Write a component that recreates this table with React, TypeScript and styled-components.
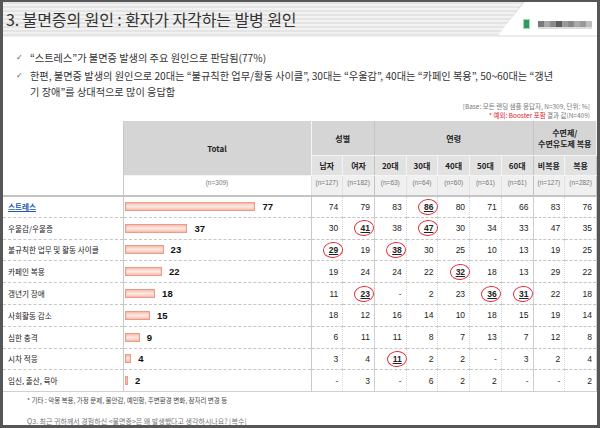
import React from "react";
import styled, { createGlobalStyle } from "styled-components";

const GlobalStyle = createGlobalStyle`
  html, body {
    margin: 0;
    padding: 0;
    background: #ffffff;
  }
  body {
    font-family: "Noto Sans CJK KR", "Liberation Sans", sans-serif;
    color: #222;
  }
`;

interface Row {
  label: string;
  total: number;
  values: (number | null)[];
  circled: number[];
  highlight?: boolean;
}

const rows: Row[] = [
  { label: "스트레스", total: 77, values: [74, 79, 83, 86, 80, 71, 66, 83, 76], circled: [3], highlight: true },
  { label: "우울감/우울증", total: 37, values: [30, 41, 38, 47, 30, 34, 33, 47, 35], circled: [1, 3] },
  { label: "불규칙한 업무 및 활동 사이클", total: 23, values: [29, 19, 38, 30, 25, 10, 13, 19, 25], circled: [0, 2] },
  { label: "카페인 복용", total: 22, values: [19, 24, 24, 22, 32, 18, 13, 29, 22], circled: [4] },
  { label: "갱년기 장애", total: 18, values: [11, 23, null, 2, 23, 36, 31, 22, 18], circled: [1, 5, 6] },
  { label: "사회활동 감소", total: 15, values: [18, 12, 16, 14, 10, 18, 15, 19, 14], circled: [] },
  { label: "심한 충격", total: 9, values: [6, 11, 11, 8, 7, 13, 7, 12, 8], circled: [] },
  { label: "시차 적응", total: 4, values: [3, 4, 11, 2, 2, null, 3, 2, 4], circled: [2] },
  { label: "임신, 출산, 육아", total: 2, values: [null, 3, null, 6, 2, 2, null, null, 2], circled: [] },
];

const subColumns = [
  { name: "남자", n: 127 },
  { name: "여자", n: 182 },
  { name: "20대", n: 63 },
  { name: "30대", n: 64 },
  { name: "40대", n: 60 },
  { name: "50대", n: 61 },
  { name: "60대", n: 61 },
  { name: "비복용", n: 127 },
  { name: "복용", n: 282 },
];

// columns that close a group (성별 / 연령 / 수면제)
const groupEnds = [1, 6, 8];

// blurred company wordmark, drawn as shaded blocks
const logoShades = ["#7a7a7a", "#a8a8a8", "#8a8a8a", "#5e5e5e", "#9a9a9a", "#888", "#aaa", "#999", "#bdbdbd"];

export default function App() {
  return (
    <>
      <GlobalStyle />
      <Frame>
        <Header>
          <TitleBand>
            <Title>3. 불면증의 원인 : 환자가 자각하는 발병 원인</Title>
          </TitleBand>
          <LogoArea>
            <GreenMark />
            <Wordmark>
              {logoShades.map((c, i) => (
                <Block key={i} $color={c} />
              ))}
            </Wordmark>
          </LogoArea>
        </Header>

        <Bullets>
          <Bullet>
            <Check>✓</Check>
            <span>“스트레스”가 불면증 발생의 주요 원인으로 판담됨(77%)</span>
          </Bullet>
          <Bullet>
            <Check>✓</Check>
            <span>
              한편, 불면증 발생의 원인으로 20대는 “불규칙한 업무/활동 사이클”, 30대는 “우울감”, 40대는 “카페인 복용”, 50~60대는 “갱년
              <br />
              기 장애”를 상대적으로 많이 응답함
            </span>
          </Bullet>
        </Bullets>

        <BaseNote>
          <div>[Base: 모든 랜딩 샘플 응답자, N=309, 단위: %]</div>
          <div>
            <Red>* 예외: Booster 포함</Red> 결과 값(N=409)
          </div>
        </BaseNote>

        <Table>
          <colgroup>
            <col style={{ width: 120 }} />
            <col style={{ width: 188 }} />
            {subColumns.map((c) => (
              <col key={c.name} />
            ))}
          </colgroup>
          <thead>
            <tr>
              <BlankHead rowSpan={3} />
              <HeadCell rowSpan={2} $tone="dark" $height={53}>
                Total
              </HeadCell>
              <HeadCell colSpan={2} $tone="dark" $height={34} $groupEnd>
                성별
              </HeadCell>
              <HeadCell colSpan={5} $tone="dark" $groupEnd>
                연령
              </HeadCell>
              <HeadCell colSpan={2} $tone="dark">
                수면제/
                <br />
                수면유도제 복용
              </HeadCell>
            </tr>
            <tr>
              {subColumns.map((c, i) => (
                <HeadCell key={c.name} $tone="mid" $height={19} $groupEnd={groupEnds.includes(i)}>
                  {c.name}
                </HeadCell>
              ))}
            </tr>
            <tr>
              <NCell $tone="white">(n=309)</NCell>
              {subColumns.map((c, i) => (
                <NCell key={c.name} $tone="light" $groupEnd={groupEnds.includes(i)}>
                  (n={c.n})
                </NCell>
              ))}
            </tr>
          </thead>
          <tbody>
            {rows.map((r, ri) => (
              <BodyRow key={r.label} $last={ri === rows.length - 1}>
                <LabelCell $highlight={r.highlight}>{r.label}</LabelCell>
                <TotalCell>
                  <BarWrap>
                    <Bar style={{ width: Math.max(r.total * 1.7, 3) }} />
                    <BarValue>{r.total}</BarValue>
                  </BarWrap>
                </TotalCell>
                {r.values.map((v, i) => (
                  <NumCell key={i} $groupEnd={groupEnds.includes(i)}>
                    {v === null ? <Dash>-</Dash> : r.circled.includes(i) ? <Circled>{v}</Circled> : v}
                  </NumCell>
                ))}
              </BodyRow>
            ))}
          </tbody>
        </Table>

        <Footnotes>
          <Note>* 기타 : 악몽 복용, 가정 문제, 불안감, 예민함, 주변환경 변화, 잠자리 변경 등</Note>
          <Question>Q3. 최근 귀하께서 경험하신 &lt;불면증&gt;은 왜 발생했다고 생각하시나요? [복수]</Question>
        </Footnotes>
      </Frame>
    </>
  );
}

const Frame = styled.div`
  width: 600px;
  height: 428px;
  box-sizing: border-box;
  border-style: solid;
  border-color: #565656;
  border-width: 2px 3px 3px 3px;
  background: #ffffff;
  overflow: hidden;
  display: flex;
  flex-direction: column;
`;

const Header = styled.div`
  display: flex;
  height: 35px;
  flex: none;
`;

const TitleBand = styled.div`
  width: 520px;
  flex: none;
  display: flex;
  align-items: center;
  padding-left: 3px;
  box-sizing: border-box;
  background: repeating-linear-gradient(to bottom, #e4e4e4 0 2px, #f2f2f2 2px 4px);
  clip-path: polygon(0 0, 100% 0, calc(100% - 26px) 100%, 0 100%);
`;

const Title = styled.h1`
  margin: 0;
  font-size: 16px;
  font-weight: 400;
  color: #333;
  letter-spacing: -0.1px;
  white-space: nowrap;
  line-height: 1;
  padding-bottom: 2px;
`;

const LogoArea = styled.div`
  flex: 1;
  min-width: 0;
  margin-left: -26px;
  padding: 17px 0 0 26px;
  box-sizing: border-box;
  display: flex;
  align-items: flex-start;
  gap: 8px;
  border-bottom: 2px solid #ececec;
  background: linear-gradient(
      to bottom right,
      transparent calc(50% - 0.7px),
      #c8c8c8 50%,
      transparent calc(50% + 0.7px)
    )
    left top / 27px 100% no-repeat;
`;

const GreenMark = styled.div`
  width: 5px;
  height: 8px;
  flex: none;
  background: #2e9a5a;
  border: 1px solid #a9d8b9;
`;

const Wordmark = styled.div`
  display: flex;
  padding-top: 2px;
  border-bottom: 2px solid #dcdcdc;
`;

const Block = styled.div<{ $color: string }>`
  width: 6px;
  height: 6px;
  background: ${(p) => p.$color};
`;

const Bullets = styled.ul`
  list-style: none;
  margin: 0;
  padding: 13px 0 0 13px;
  font-size: 10.2px;
  color: #333;
  line-height: 16px;
`;

const Bullet = styled.li`
  display: flex;
  margin-bottom: 2px;
  white-space: nowrap;
`;

const Check = styled.span`
  width: 14px;
  flex: none;
  font-family: "DejaVu Sans", sans-serif;
  font-size: 8px;
  color: #555;
`;

const BaseNote = styled.div`
  text-align: right;
  padding: 0 7px 0 0;
  font-size: 6.5px;
  line-height: 8.5px;
  color: #777;
`;

const Red = styled.span`
  color: #e0161e;
`;

const Table = styled.table`
  margin-top: 2px;
  width: 594px;
  border-collapse: collapse;
  table-layout: fixed;
  flex: none;
`;

const BlankHead = styled.th`
  background: #ffffff;
  border-right: 1px solid #c9c9c9;
  border-bottom: 2px solid #c4c4c4;
  padding: 0;
`;

const tones = {
  dark: "#d5d5d5",
  mid: "#e2e2e2",
  light: "#f0f0f0",
  white: "#ffffff",
};

const HeadCell = styled.th<{ $tone: keyof typeof tones; $height?: number; $groupEnd?: boolean }>`
  background: ${(p) => tones[p.$tone]};
  height: ${(p) => (p.$height ? `${p.$height}px` : "auto")};
  padding: 0;
  font-size: 8px;
  font-weight: 700;
  line-height: 11px;
  color: #222;
  text-align: center;
  vertical-align: middle;
  border-right: 1px solid ${(p) => (p.$groupEnd ? "#c4c4c4" : "#f4f4f4")};
  border-bottom: 1px solid #f4f4f4;
`;

const NCell = styled.td<{ $tone: keyof typeof tones; $groupEnd?: boolean }>`
  background: ${(p) => tones[p.$tone]};
  height: 20px;
  padding: 3px 0 0 0;
  box-sizing: border-box;
  vertical-align: top;
  text-align: center;
  font-family: "Liberation Sans", sans-serif;
  font-size: 6.5px;
  color: #777;
  border-right: 1px solid ${(p) => (p.$groupEnd ? "#c4c4c4" : "#e2e2e2")};
  border-bottom: 2px solid #c4c4c4;
  white-space: nowrap;
`;

const BodyRow = styled.tr<{ $last?: boolean }>`
  height: 21.8px;
  & > td {
    border-bottom: 1px ${(p) => (p.$last ? "solid #d0d0d0" : "dashed #c6c6c6")};
  }
`;

const LabelCell = styled.td<{ $highlight?: boolean }>`
  padding: 0 0 0 5px;
  font-size: 7.6px;
  white-space: nowrap;
  color: ${(p) => (p.$highlight ? "#1d5bb5" : "#222")};
  font-weight: ${(p) => (p.$highlight ? 700 : 400)};
  text-decoration: ${(p) => (p.$highlight ? "underline" : "none")};
  border-right: 1px solid #c9c9c9;
`;

const TotalCell = styled.td`
  padding: 0 0 0 1px;
  border-right: 1px solid #c9c9c9;
`;

const BarWrap = styled.div`
  display: flex;
  align-items: center;
`;

const Bar = styled.div`
  height: 9px;
  box-sizing: border-box;
  border: 1px solid #ee9a86;
  background: linear-gradient(to bottom, #f6c2b4 0%, #fde9e3 50%, #f6c2b4 100%);
  box-shadow: inset 0 0 2px #f3b3a2;
`;

const BarValue = styled.span`
  margin-left: 7px;
  font-family: "Liberation Sans", sans-serif;
  font-weight: 700;
  font-size: 9.5px;
  color: #111;
`;

const NumCell = styled.td<{ $groupEnd?: boolean }>`
  padding: 0 4px 0 0;
  text-align: right;
  font-family: "Liberation Sans", sans-serif;
  font-size: 8.5px;
  color: #222;
  border-right: 1px ${(p) => (p.$groupEnd ? "solid #cfcfcf" : "dotted #d6d6d6")};
`;

const Dash = styled.span`
  color: #444;
`;

const Circled = styled.span`
  position: relative;
  display: inline-block;
  text-decoration: underline;
  font-weight: 700;
  &::before {
    content: "";
    position: absolute;
    left: -6px;
    right: -5px;
    top: -3px;
    bottom: -3px;
    border: 1px solid #e3303c;
    border-radius: 50%;
    transform: rotate(-5deg);
  }
`;

const Footnotes = styled.div`
  padding: 3px 0 0 24px;
  font-size: 6.5px;
`;

const Note = styled.div`
  color: #444;
  line-height: 10px;
`;

const Question = styled.div`
  margin-top: 11px;
  color: #777;
  font-size: 7px;
  line-height: 10px;
`;
